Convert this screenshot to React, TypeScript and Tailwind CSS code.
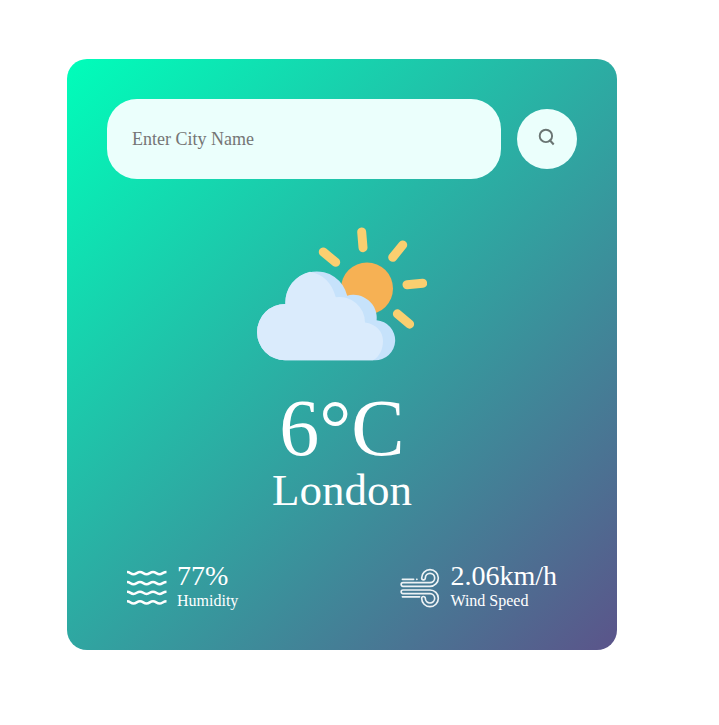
import React from "react";

function SearchIcon() {
  return (
    <svg className="h-5 w-5" viewBox="0 0 20 20" fill="none" stroke="#6a7573" strokeWidth="1.9">
      <circle cx="8.9" cy="8.9" r="6.2" />
      <path d="M12.4 12.8L16.7 17.5" strokeWidth="2.1" />
    </svg>
  );
}

function PartlyCloudyIcon() {
  return (
    <svg className="h-[170px] w-[170px]" viewBox="257 209 170 170" fill="none">
      <g stroke="#facf70" strokeWidth="9" strokeLinecap="round">
        <path d="M361.7 232L363 247.7M323.3 252L335.7 262.3M402.7 245L392.7 257.3M407 284.7L422.7 283.3M397.4 313.8L409.6 324.2" />
      </g>
      <circle cx="367" cy="288.5" r="26" fill="#f6b154" />
      <path
        fill="#c6e2fb"
        d="M285 360.3A28.1 28.1 0 0 1 285.4 304A31.3 31.3 0 0 1 347.2 295.8A23 23 0 0 1 376.6 320.3A20.03 20.03 0 0 1 374.6 360.3Z"
      />
      <path
        fill="#daebfc"
        d="M285 360.3A28.1 28.1 0 0 1 285.4 304A31.3 31.3 0 0 1 310 271.7C323 274 332 283 335.8 297.2A25.5 25.5 0 0 1 365 322.4C376 324 383 331 383 341C383 350 379 357 373 360.3Z"
      />
    </svg>
  );
}

function HumidityIcon() {
  return (
    <svg className="h-10 w-10" viewBox="0 0 40 40" fill="none" stroke="#fff" strokeWidth="2.5">
      {[5, 15, 24.7, 34.3].map((y) => (
        <path
          key={y}
          transform={`translate(0 ${y})`}
          d="M0 -1C3.5 -1 3.5 1.2 6.5 1.2S10 -1 13 -1S16.5 1.2 19.5 1.2S23 -1 26 -1S29.5 1.2 32.5 1.2S36 -1 39.5 -1"
        />
      ))}
    </svg>
  );
}

function WindIcon() {
  return (
    <svg
      className="h-10 w-10"
      viewBox="7 6 120 120"
      fill="none"
      stroke="#fff"
      strokeOpacity="0.9"
      strokeWidth="5"
      strokeLinecap="round"
      strokeLinejoin="round"
    >
      <path d="M14 40H48M57 40H58M14 92.5H66" />
      <path d="M16 50H97A14 14 0 1 0 83 36A5.5 5.5 0 0 1 72 36A25 25 0 1 1 97 61H16A5.5 5.5 0 0 1 16 50Z" />
      <path d="M16 83H97A14 14 0 1 1 83 97A5.5 5.5 0 0 0 72 97A25 25 0 1 0 97 72H16A5.5 5.5 0 0 0 16 83Z" />
    </svg>
  );
}

type StatProps = { icon: React.ReactNode; value: string; label: string };

function Stat({ icon, value, label }: StatProps) {
  return (
    <div className="flex items-start">
      <div className="mt-2 mr-2.5">{icon}</div>
      <div>
        <p className="text-[28px] leading-8">{value}</p>
        <p className="text-base leading-[18px]">{label}</p>
      </div>
    </div>
  );
}

export default function App() {
  return (
    <main className="min-h-[725px] bg-white pt-[59px] pl-[67px] font-['Liberation_Serif',serif]">
      <section className="h-[591px] w-[550px] rounded-[20px] bg-[linear-gradient(135deg,#00feba,#5b548a)] pt-10 text-white">
        <div className="flex items-center gap-4 px-10">
          <input
            className="h-20 w-[394px] rounded-[30px] bg-[#ebfffc] px-[25px] text-[18px] text-[#555] outline-none placeholder:text-[#757575]"
            placeholder="Enter City Name"
          />
          <button className="flex h-[60px] w-[60px] items-center justify-center rounded-full bg-[#ebfffc] pb-1" aria-label="Search">
            <SearchIcon />
          </button>
        </div>
        <div className="mt-[30px] flex flex-col items-center">
          <PartlyCloudyIcon />
          <h1 className="mt-2 text-[80px] leading-[82px]">6°C</h1>
          <h2 className="-mt-0.5 text-[45px] leading-[46px]">London</h2>
        </div>
        <div className="mt-[47px] flex justify-between px-[60px]">
          <Stat icon={<HumidityIcon />} value="77%" label="Humidity" />
          <Stat icon={<WindIcon />} value="2.06km/h" label="Wind Speed" />
        </div>
      </section>
    </main>
  );
}
